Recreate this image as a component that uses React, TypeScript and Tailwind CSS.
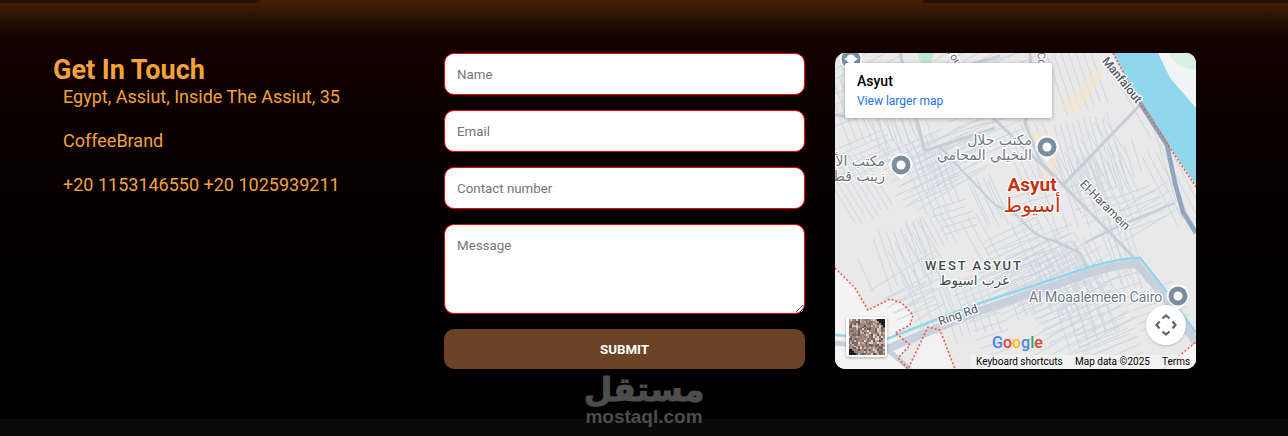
import React, { useMemo } from "react";

function rng(seed: number) {
  let s = seed;
  return () => {
    s = (s * 1664525 + 1013904223) % 4294967296;
    return s / 4294967296;
  };
}

function MinorStreets() {
  const d = useMemo(() => {
    const r = rng(23);
    const out: string[] = [];
    const keep = (x: number, y: number) => {
      if (y < 140 && x > 285 + y * 0.55) return false;
      if (y > 222 && x < 70 && x + (316 - y) < 110) return false;
      if (y > 285 && x > 75 && x < 100 && y - 274 > (x - 93) * -2) return false;
      return true;
    };
    for (let p = 0; p < 85; p++) {
      const cx = r() * 361;
      const cy = r() * 316;
      const a = (r() > 0.5 ? -0.42 : 1.15) + (r() - 0.5) * 0.3;
      const w = 16 + r() * 26;
      const h = 12 + r() * 20;
      const gap = 5.500 + r() * 6;
      const cos = Math.cos(a);
      const sin = Math.sin(a);
      for (let t = -h; t <= h; t += gap) {
        const j = (r() - 0.5) * 8;
        const x1 = cx - sin * t - cos * (w + j);
        const y1 = cy + cos * t - sin * (w + j);
        const x2 = cx - sin * t + cos * (w - j);
        const y2 = cy + cos * t + sin * (w - j);
        if (keep(x1, y1) && keep(x2, y2)) {
          out.push(`M${x1.toFixed(1)} ${y1.toFixed(1)}L${x2.toFixed(1)} ${y2.toFixed(1)}`);
        }
      }
    }
    return out.join("");
  }, []);
  return <path d={d} stroke="#ccd5e0" strokeWidth="0.9" fill="none" />;
}

function Pin({ x, y }: { x: number; y: number }) {
  return (
    <g transform={`translate(${x} ${y})`}>
      <path d="M-11.500 0a11.500 11.500 0 1 1 23 0c0 5-6 9-11.500 14.500c-5.500-5.500-11.500-9.500-11.500-14.500z" fill="#fff" />
      <circle r="9.500" fill="#7b8e9e" />
      <circle r="4.500" fill="#fff" />
    </g>
  );
}

function Label(props: React.SVGProps<SVGTextElement>) {
  return <text stroke="#fff" strokeWidth="2.500" paintOrder="stroke" strokeLinejoin="round" {...props} />;
}

function MapDrawing() {
  const arabic = "'DejaVu Sans','Noto Sans',sans-serif";
  const roboto = "Roboto,sans-serif";
  return (
    <svg viewBox="0 0 361 316" className="block h-full w-full">
      <rect width="361" height="316" fill="#e9e9e9" />
      {/* desert */}
      <path d="M0 215L20 235L33 257L55 246L67 250L78 262L75 272L60 280L75 292L63 305L73 316L0 316Z" fill="#f4f4f4" />
      <path d="M93 274L105 277L120 316L73 316Z" fill="#f1f1f1" />
      <path d="M328 316L361 289L361 316Z" fill="#f4f4f4" />
      {/* far bank */}
      <path d="M323 0L335 25L361 55L361 0Z" fill="#f1f3f4" />
      <path d="M333 0L361 0L361 16Q345 18 333 0Z" fill="#d9f0e3" />
      <MinorStreets />
      {/* parks and tinted blocks */}
      <path d="M83 0L99 0Q96 12 90 13Q84 10 83 0Z" fill="#bfe6cf" />
      <path d="M225 55L262 15L270 22L240 62Z" fill="#f3e6d2" opacity="0.7" />
      <path d="M195 77L210 77L205 92L198 92Z" fill="#f3e6d2" opacity="0.7" />
      <path d="M208 100L222 100L218 130L208 130Z" fill="#f3e6d2" opacity="0.7" />
      <path d="M100 270L108 268L112 279L103 281Z" fill="#f5e7d3" />
      {/* secondary roads */}
      <g stroke="#c5ced9" strokeWidth="3" fill="none" strokeLinejoin="round">
        <path d="M65 0L82 68L90 98" />
        <path d="M90 98L160 75" />
        <path d="M103 92L160 152L187 165" strokeWidth="2" />
        <path d="M158 65L228 132" />
        <path d="M228 132L305 52" />
        <path d="M195 0L198 40L190 70L205 108L228 132" />
        <path d="M133 12L165 3" />
        <path d="M0 62L15 64" />
        <path d="M228 132L285 190L302 208" />
        <path d="M250 190L290 170L340 150" strokeWidth="2" />
        <path d="M185 165Q200 185 220 188Q235 195 245 200L252 216" strokeWidth="2.500" />
      </g>
      {/* canal and ring road */}
      <path d="M0 282L52 286L105 265L142 251L255 214Q285 205 305 205L328 234L361 280" stroke="#92d6ee" strokeWidth="2.500" fill="none" />
      <path d="M52 296L105 274L142 259L255 220Q285 211 302 211L328 242L361 290" stroke="#c8d0dc" strokeWidth="8" fill="none" />
      <path d="M0 290L52 296L75 316" stroke="#c8d0dc" strokeWidth="5" fill="none" />
      {/* river and highway */}
      <path d="M278 0L323 0L335 25L361 55L361 132L303 47Z" fill="#90d7ee" />
      <path d="M305 50L332 92L340 130L348 159L361 180" stroke="#8fa5bd" strokeWidth="4.500" fill="none" />
      {/* boundary */}
      <g stroke="#ea5f4b" strokeWidth="1.600" strokeDasharray="2 2" fill="none">
        <path d="M278 0L303 47L361 134" />
        <path d="M0 215L20 235L33 257L55 246L67 250L78 262L75 272L60 280L75 292L63 305L73 316L93 274L105 277L120 316" />
        <path d="M328 316L361 289" />
      </g>
      {/* map labels */}
      <Label x="287" y="31" transform="rotate(51 287 27)" fontFamily={roboto} fontSize="12" fontWeight="500" fill="#4c5560" textAnchor="middle">Manfalout</Label>
      <Label x="116" y="6" transform="rotate(58 116 6)" fontFamily={roboto} fontSize="11" fill="#5f6873" textAnchor="middle">You</Label>
      <Label x="203" y="8" transform="rotate(85 203 8)" fontFamily={roboto} fontSize="11" fill="#5f6873" textAnchor="middle">Cor</Label>
      <Label x="270" y="156" transform="rotate(45 270 152)" fontFamily={roboto} fontSize="12" fill="#4c5560" textAnchor="middle">El-Haramein</Label>
      <Label x="123" y="266" transform="rotate(-19 123 262)" fontFamily={roboto} fontSize="12" fill="#4c5560" textAnchor="middle">Ring Rd</Label>
      <Label x="197" y="92" direction="rtl" fontFamily={arabic} fontSize="14" fill="#6e7780">مكتب جلال</Label>
      <Label x="197" y="107" direction="rtl" fontFamily={arabic} fontSize="14" fill="#6e7780">النخيلي المحامي</Label>
      <Label x="50" y="113" direction="rtl" fontFamily={arabic} fontSize="14" fill="#6e7780">مكتب الأ</Label>
      <Label x="50" y="128" direction="rtl" fontFamily={arabic} fontSize="14" fill="#6e7780">زينب قطب</Label>
      <Pin x={212} y={94} />
      <Pin x={66} y={112} />
      <Pin x={343} y={243} />
      <Pin x={16} y={6} />
      <path d="M9 6l7-4l7 4l-7 4z" fill="#fff" />
      <Label x="197" y="138" textAnchor="middle" fontFamily={roboto} fontSize="19" fontWeight="700" fill="#c5300f">Asyut</Label>
      <Label x="197" y="159" textAnchor="middle" fontFamily={arabic} fontSize="20" fill="#c5300f">أسيوط</Label>
      <Label x="139" y="217" textAnchor="middle" fontFamily={roboto} fontSize="13" fontWeight="500" letterSpacing="2" fill="#3c4a4f">WEST ASYUT</Label>
      <Label x="139" y="232" textAnchor="middle" fontFamily={arabic} fontSize="13.500" fill="#3c4a4f">غرب اسيوط</Label>
      <Label x="194" y="249" fontFamily={roboto} fontSize="14" fill="#6d7b87" textAnchor="start">Al Moaalemeen Cairo</Label>
    </svg>
  );
}

function Satellite() {
  const cells = useMemo(() => {
    const r = rng(5);
    const colors = ["#9b8076", "#a78a80", "#7f6a62", "#c4b0a6", "#5f5c5c", "#ddd0c8", "#8d756e", "#a58c84"];
    const out: { x: number; y: number; c: string }[] = [];
    for (let y = 0; y < 19; y++) {
      for (let x = 0; x < 19; x++) {
        let c = colors[Math.floor(r() * colors.length)];
        if (x - y > 14 || (x < 4 && y > 15 && x + (18 - y) < 4)) c = "#1d1d1d";
        out.push({ x: x * 2, y: y * 2, c });
      }
    }
    return out;
  }, []);
  return (
    <svg viewBox="0 0 38 38" className="block h-full w-full" shapeRendering="crispEdges">
      {cells.map((cell) => (
        <rect key={`${cell.x}-${cell.y}`} x={cell.x} y={cell.y} width="2" height="2" fill={cell.c} />
      ))}
    </svg>
  );
}

function MapPanel() {
  return (
    <div className="relative h-[316px] w-[361px] shrink-0 overflow-hidden rounded-[10px] [font-family:Roboto,sans-serif]">
      <MapDrawing />
      <div className="absolute left-[10px] top-[10px] h-[55px] w-[207px] rounded-[2px] bg-white pl-[12px] pt-[10px] shadow-[0_1px_4px_rgba(0,0,0,0.3)]">
        <div className="text-[14px] font-medium leading-[17px] text-black">Asyut</div>
        <div className="mt-[3px] text-[12px] leading-[16px] text-[#1a73e8]">View larger map</div>
      </div>
      <div className="absolute bottom-[12px] left-[11px] h-[40px] w-[41px] rounded-[2px] border-2 border-white bg-white shadow-[0_1px_3px_rgba(0,0,0,0.3)]">
        <Satellite />
      </div>
      <div className="absolute bottom-[24px] right-[10px] flex h-[40px] w-[40px] items-center justify-center rounded-full bg-white shadow-[0_1px_3px_rgba(0,0,0,0.2)]">
        <svg viewBox="0 0 24 24" className="h-[24px] w-[24px]" fill="none" stroke="#5f6368" strokeWidth="2.200">
          <path d="M8.500 5.500L12 2.500L15.500 5.500" />
          <path d="M8.500 18.500L12 21.500L15.500 18.500" />
          <path d="M5.500 8.500L2.500 12L5.500 15.500" />
          <path d="M18.500 8.500L21.500 12L18.500 15.500" />
        </svg>
      </div>
      <div className="absolute bottom-[18px] left-[157px] text-[16px] font-medium leading-[16px] [font-family:Roboto,sans-serif]">
        <span className="text-[#4285f4]">G</span>
        <span className="text-[#ea4335]">o</span>
        <span className="text-[#fbbc05]">o</span>
        <span className="text-[#4285f4]">g</span>
        <span className="text-[#34a853]">l</span>
        <span className="text-[#ea4335]">e</span>
      </div>
      <div className="absolute bottom-0 right-0 flex h-[14px] w-[225px] items-center bg-[#f5f5f5]/70 pl-[5px] text-[10px] leading-[14px] text-black">
        <span className="w-[99px]">Keyboard shortcuts</span>
        <span className="w-[87px]">Map data ©2025</span>
        <span>Terms</span>
      </div>
    </div>
  );
}

const fieldClass =
  "block w-full rounded-[10px] border-[1.500px] border-[#ff0000] bg-white px-[12px] text-[13.333px] text-black outline-none placeholder:text-[#757575]";

export default function App() {
  return (
    <div className="relative flex h-[436px] w-full flex-col overflow-hidden bg-[linear-gradient(to_bottom,#432105_0px,#3a1b05_8px,#240e04_22px,#140200_40px,#0d0000_90px,#050000_200px,#000000_300px)] [font-family:Roboto,sans-serif]">
      <div className="h-[3px] shrink-0 bg-[linear-gradient(to_right,#2a1004_0px,#2a1004_255px,#432005_262px,#432005_920px,#2a1004_925px)]" />
      <main className="flex flex-1 pl-[53px] pr-[92px] pt-[50px]">
        <section className="w-[391px] shrink-0 pt-[2px] text-[#f2a33a]">
          <h2 className="text-[27px] font-bold leading-[30px]">Get In Touch</h2>
          <div className="pl-[10px] text-[18px] leading-[24px]">
            <p className="mb-[20px]">Egypt, Assiut, Inside The Assiut, 35</p>
            <p className="mb-[20px]">CoffeeBrand</p>
            <p>+20 1153146550 +20 1025939211</p>
          </div>
        </section>
        <form className="flex w-[361px] shrink-0 flex-col gap-[15px]">
          <input className={`${fieldClass} h-[42px] pt-[1px]`} placeholder="Name" />
          <input className={`${fieldClass} h-[42px] pt-[1px]`} placeholder="Email" />
          <input className={`${fieldClass} h-[42px] pt-[1px]`} placeholder="Contact number" />
          <textarea className={`${fieldClass} h-[90px] pt-[11px]`} placeholder="Message" />
          <button type="button" className="h-[40px] rounded-[10px] bg-[#6b4226] pt-[1px] text-[13.333px] font-bold text-white">
            SUBMIT
          </button>
        </form>
        <div className="ml-[30px]">
          <MapPanel />
        </div>
      </main>
      <div className="h-[17px] shrink-0 bg-[#0a0a0a]" />
      <div className="absolute left-[580px] top-[372px] flex w-[128px] flex-col items-center text-[#4d4d4d]">
        <div className="text-[33px] font-bold leading-[36px] [-webkit-text-stroke:1px_#4d4d4d] [font-family:'DejaVu_Sans',sans-serif]">مستقل</div>
        <div className="text-[19px] font-bold leading-[18px] [font-family:'Liberation_Sans',sans-serif]">mostaql.com</div>
      </div>
    </div>
  );
}
